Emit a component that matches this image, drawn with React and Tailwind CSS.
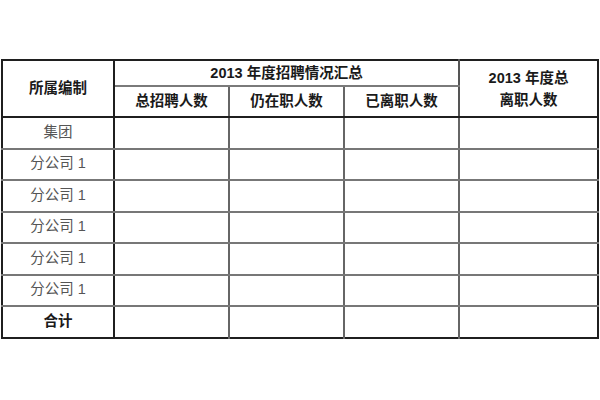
import React from "react";

const rows = ["集团", "分公司 1", "分公司 1", "分公司 1", "分公司 1", "分公司 1"];

const font = { fontFamily: '"Liberation Sans", "Noto Sans CJK SC", sans-serif' };

const App = () => {
  return (
    <div className="w-[600px] h-[400px] bg-white pt-[59px] pl-[1px]" style={font}>
      <table className="table-fixed border-collapse border-2 border-[#1f1f1f] text-[14.5px] text-center">
        <colgroup>
          <col className="w-[112px]" />
          <col className="w-[115px]" />
          <col className="w-[115px]" />
          <col className="w-[115px]" />
          <col className="w-[139px]" />
        </colgroup>
        <thead>
          <tr className="h-[26px]">
            <th
              rowSpan={2}
              className="border-r-2 border-b-2 border-[#1f1f1f] font-bold text-[#1a1a1a] p-0"
            >
              所属编制
            </th>
            <th
              colSpan={3}
              className="border-b-2 border-b-[#7a7a7a] font-bold text-[#1a1a1a] p-0 pt-[2px]"
            >
              2013 年度招聘情况汇总
            </th>
            <th
              rowSpan={2}
              className="border-l-2 border-l-[#555] border-b-2 border-b-[#1f1f1f] font-bold text-[#1a1a1a] p-0 leading-[22px]"
            >
              2013 年度总
              <br />
              离职人数
            </th>
          </tr>
          <tr className="h-[31px]">
            {["总招聘人数", "仍在职人数", "已离职人数"].map((t) => (
              <th
                key={t}
                className="border-l-2 border-l-[#666] border-b-2 border-b-[#1f1f1f] font-bold text-[#1a1a1a] p-0"
              >
                {t}
              </th>
            ))}
          </tr>
        </thead>
        <tbody>
          {rows.map((r, i) => (
            <tr key={i} className="h-[31.5px]">
              <td className="border-r-2 border-r-[#1f1f1f] border-b-2 border-b-[#777] text-[#555] p-0">
                {r}
              </td>
              {[0, 1, 2, 3].map((c) => (
                <td key={c} className="border-l-2 border-l-[#666] border-b-2 border-b-[#777] p-0"></td>
              ))}
            </tr>
          ))}
          <tr className="h-[31.5px]">
            <td className="border-r-2 border-r-[#1f1f1f] font-bold text-[#1a1a1a] p-0">合计</td>
            {[0, 1, 2, 3].map((c) => (
              <td key={c} className="border-l-2 border-l-[#666] p-0"></td>
            ))}
          </tr>
        </tbody>
      </table>
    </div>
  );
};

export default App;
